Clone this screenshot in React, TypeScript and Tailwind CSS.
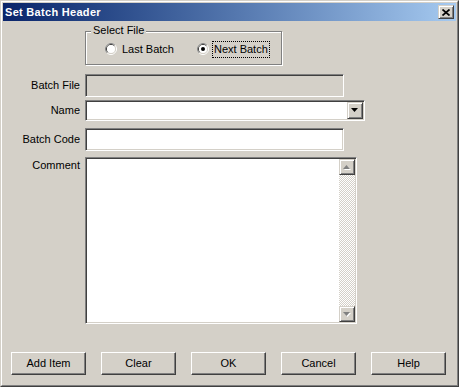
import React from 'react';

const sunken =
  'border border-t-[#808080] border-l-[#808080] border-r-white border-b-white shadow-[inset_1px_1px_0_#404040,inset_-1px_-1px_0_#d4d0c8]';
const raised =
  'border border-t-white border-l-white border-r-[#404040] border-b-[#404040] shadow-[inset_-1px_-1px_0_#808080]';
const raisedSmall =
  'border border-t-[#d4d0c8] border-l-[#d4d0c8] border-r-[#404040] border-b-[#404040] shadow-[inset_1px_1px_0_#fff,inset_-1px_-1px_0_#808080]';

const Radio: React.FC<{ checked?: boolean }> = ({ checked }) => (
  <svg width="12" height="12" viewBox="0 0 12 12" className="shrink-0">
    <circle cx="6" cy="6" r="5.5" fill="none" stroke="#fff" />
    <path d="M2.1 9.9 A5.5 5.5 0 0 1 9.9 2.1" fill="none" stroke="#808080" />
    <circle cx="6" cy="6" r="4.5" fill="none" stroke="#d4d0c8" />
    <path d="M2.8 9.2 A4.5 4.5 0 0 1 9.2 2.8" fill="none" stroke="#404040" />
    <circle cx="6" cy="6" r="4" fill="#fff" />
    {checked && <circle cx="6" cy="6" r="2" fill="#000" />}
  </svg>
);

const Arrow: React.FC<{ up?: boolean; disabled?: boolean }> = ({ up, disabled }) => (
  <svg width="8" height="5" viewBox="0 0 8 5">
    {disabled && (
      <path d={up ? 'M4.5 1 L8 5 L1 5 Z' : 'M1 1 L8 1 L4.5 5 Z'} fill="#fff" />
    )}
    <path d={up ? 'M3.5 0 L7 4 L0 4 Z' : 'M0 0 L7 0 L3.5 4 Z'} fill={disabled ? '#808080' : '#000'} />
  </svg>
);

const Label: React.FC<{ children: React.ReactNode; top?: boolean }> = ({ children, top }) => (
  <div className={`w-[77px] mr-[5px] text-right ${top ? 'self-start pt-[2px]' : ''}`}>{children}</div>
);

const Button: React.FC<{ label: string }> = ({ label }) => (
  <button className={`w-[75px] h-[23px] bg-[#d4d0c8] ${raised} flex items-center justify-center text-black`}>
    {label}
  </button>
);

export default function App() {
  return (
    <div
      className="w-[459px] h-[387px] bg-[#d4d0c8] border border-t-[#d4d0c8] border-l-[#d4d0c8] border-r-[#404040] border-b-[#404040] text-[11px] leading-[13px] text-black"
      style={{ fontFamily: '"Liberation Sans", Arial, sans-serif' }}
    >
      <div className="h-full border border-t-white border-l-white border-r-[#808080] border-b-[#808080] p-px flex flex-col">
        {/* title bar */}
        <div className="h-[18px] flex items-center justify-between bg-gradient-to-r from-[#0a246a] to-[#a6caf0]">
          <span className="pl-[2px] text-white font-bold text-[11px] tracking-[0.3px]">Set Batch Header</span>
          <div className={`mr-[2px] w-[16px] h-[14px] bg-[#d4d0c8] ${raisedSmall} flex items-center justify-center`}>
            <svg width="8" height="7" viewBox="0 0 8 7">
              <path d="M0.5 0.5 L7.5 6.5 M7.5 0.5 L0.5 6.5" stroke="#000" strokeWidth="1.7" />
            </svg>
          </div>
        </div>

        {/* Select File group */}
        <div className="relative ml-[82px] mt-[10px] w-[197px] h-[34px] border border-[#808080] shadow-[inset_1px_1px_0_#fff,1px_1px_0_#fff] flex items-center">
          <span className="absolute -top-[8px] left-[5px] px-[2px] bg-[#d4d0c8]">Select File</span>
          <div className="flex items-center pl-[19px] mt-[2px]">
            <Radio />
            <span className="ml-[5px]">Last Batch</span>
          </div>
          <div className="flex items-center ml-[23px] mt-[2px]">
            <Radio checked />
            <span className="ml-[4px] px-px py-px outline outline-1 outline-dotted outline-black">Next Batch</span>
          </div>
        </div>

        {/* Batch File */}
        <div className="flex items-center mt-[9px]">
          <Label>Batch File</Label>
          <div className={`w-[259px] h-[23px] bg-[#d4d0c8] ${sunken}`} />
        </div>

        {/* Name */}
        <div className="flex items-center mt-[3px]">
          <Label>Name</Label>
          <div className={`w-[280px] h-[21px] bg-white ${sunken} flex justify-end items-center pr-[1px]`}>
            <div className={`w-[16px] h-[17px] bg-[#d4d0c8] ${raisedSmall} flex items-center justify-center`}>
              <Arrow />
            </div>
          </div>
        </div>

        {/* Batch Code */}
        <div className="flex items-center mt-[7px]">
          <Label>Batch Code</Label>
          <div className={`w-[259px] h-[23px] bg-white ${sunken}`} />
        </div>

        {/* Comment */}
        <div className="flex mt-[6px]">
          <Label top>Comment</Label>
          <div className={`w-[272px] h-[167px] bg-white ${sunken} p-[1px] flex`}>
            <div className="flex-1" />
            <div className="w-[16px] flex flex-col">
              <div className={`h-[16px] bg-[#d4d0c8] ${raisedSmall} flex items-center justify-center`}>
                <Arrow up disabled />
              </div>
              <div className="flex-1 bg-[repeating-conic-gradient(#d4d0c8_0%_25%,#fff_0%_50%)] bg-[length:2px_2px]" />
              <div className={`h-[16px] bg-[#d4d0c8] ${raisedSmall} flex items-center justify-center`}>
                <Arrow disabled />
              </div>
            </div>
          </div>
        </div>

        {/* buttons */}
        <div className="flex gap-[15px] ml-[8px] mt-[28px]">
          <Button label="Add Item" />
          <Button label="Clear" />
          <Button label="OK" />
          <Button label="Cancel" />
          <Button label="Help" />
        </div>
      </div>
    </div>
  );
}
